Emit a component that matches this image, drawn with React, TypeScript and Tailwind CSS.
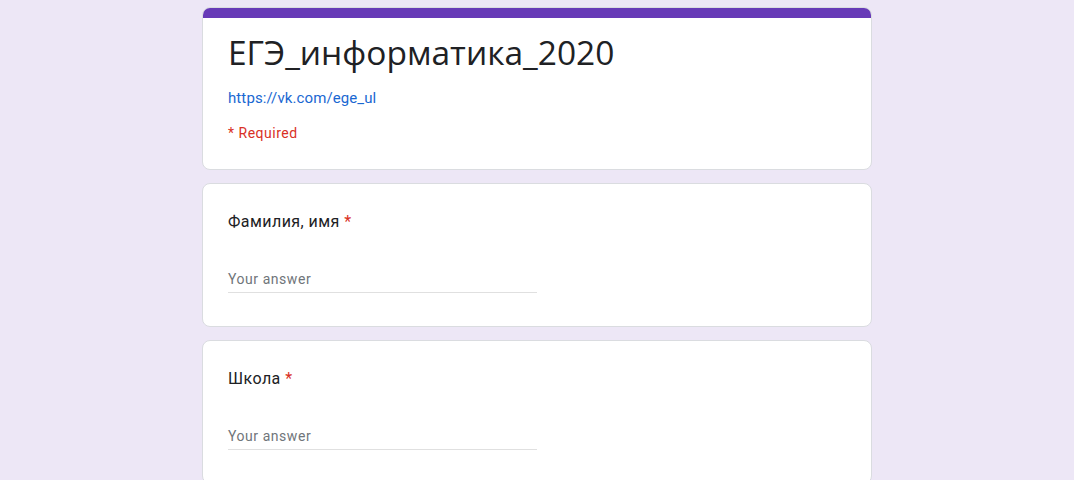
import React from "react";

const questions = ["Фамилия, имя", "Школа"];

function Question({ label }: { label: string }) {
  return (
    <div className="rounded-lg border border-[#dadce0] bg-white pl-[25px] pr-6 pt-[26px] pb-[33px]">
      <div className="text-[16px] leading-[24px] tracking-[0.45px] text-[#202124]">
        {label}
        <span className="text-[#d93025]"> *</span>
      </div>
      <div className="mt-[35px] w-[309px] border-b border-[#e0e0e0] pb-[3px] text-[14px] leading-[20px] tracking-[0.55px] text-[#70757a]">
        Your answer
      </div>
    </div>
  );
}

export default function App() {
  return (
    <div
      className="min-h-screen bg-[#ede7f6] pt-[7px] pb-6"
      style={{ fontFamily: "Roboto, 'Noto Sans', Arial, sans-serif" }}
    >
      <div className="mx-auto flex w-[670px] flex-col gap-[13px]">
        <div className="overflow-hidden rounded-lg border border-[#dadce0] bg-white">
          <div className="h-[10px] bg-[#673ab7]" />
          <div className="pl-[25px] pr-6 pt-[12px] pb-[26px]">
            <h1
              className="text-[33.5px] leading-[44px] text-[#202124]"
              style={{ fontFamily: "'Open Sans', Roboto, sans-serif" }}
            >
              ЕГЭ_информатика_2020
            </h1>
            <a className="mt-[14px] block text-[15px] leading-[20px] tracking-[0.1px] text-[#1967d2]" href="#">
              https://vk.com/ege_ul
            </a>
            <div className="mt-[15px] text-[14px] leading-[20px] tracking-[0.5px] text-[#d93025]">* Required</div>
          </div>
        </div>
        {questions.map((q) => (
          <Question key={q} label={q} />
        ))}
      </div>
    </div>
  );
}
